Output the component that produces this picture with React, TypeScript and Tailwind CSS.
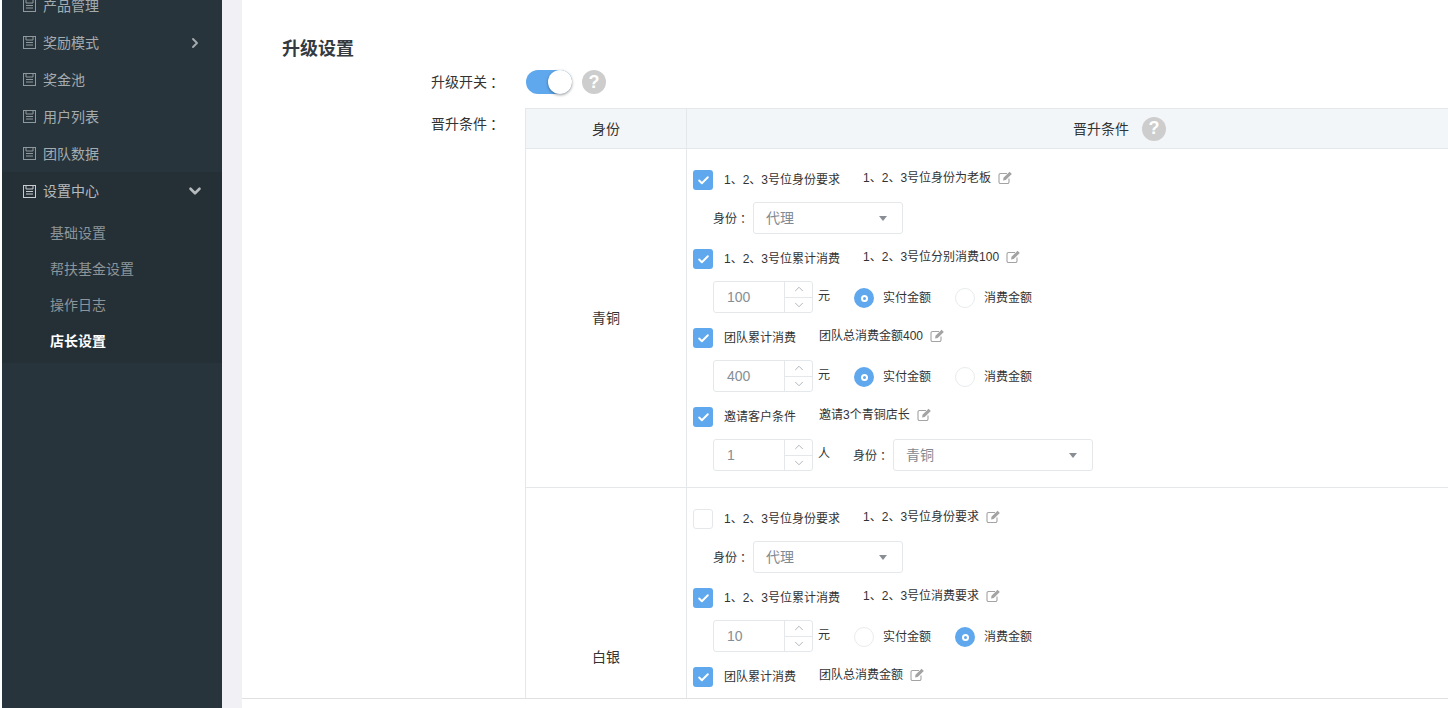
import { ChevronDown, ChevronRight, ChevronUp, Check } from "lucide-react";

const font = "font-['Liberation_Sans','Noto_Sans_CJK_SC',sans-serif]";

const NavIcon = ({ active }: { active?: boolean }) => (
	<svg width="13" height="13" viewBox="0 0 13 13" fill="none" stroke="currentColor" strokeWidth="1" className={active ? "text-[#c8cccf]" : "text-[#8f989d]"}>
		<rect x="0.5" y="0.5" width="12" height="12" />
		<path d="M3 0.5v3.5h7v-3.5M3 6.5h7M3 9h7" />
	</svg>
);

const EditIcon = () => (
	<svg width="15" height="14" viewBox="0 0 15 14" fill="none" className="text-[#a3a3a3]">
		<path d="M11 7.5v3.5a1.5 1.5 0 0 1-1.5 1.5h-7A1.5 1.5 0 0 1 1 11V4a1.5 1.5 0 0 1 1.5-1.5H9" stroke="currentColor" strokeWidth="1.1" />
		<path d="M5.5 6.8 11.6 0.8l2.2 2.2-6.1 6.1-2.6.5z" fill="currentColor" />
	</svg>
);

const Help = () => (
	<span className="flex h-6 w-6 items-center justify-center rounded-full bg-[#cdcdcd] text-[18px] font-bold text-white">?</span>
);

const Box = ({ on }: { on?: boolean }) => (
	<span className={`flex h-5 w-5 shrink-0 items-center justify-center rounded-[3px] ${on ? "bg-[#5fa8ee]" : "border border-[#e4e8eb] bg-white"}`}>
		{on && <Check size={13} strokeWidth={3.5} className="text-white" />}
	</span>
);

const CheckRow = ({ on, label, note }: { on?: boolean; label: string; note: string }) => (
	<div className="flex h-5 items-center text-xs text-[#333]">
		<Box on={on} />
		<span className="ml-[11px] mr-[23px]">{label}</span>
		<span className="relative -top-[2px]">{note}</span>
		<span className="relative -top-[2px] ml-[7px]">
			<EditIcon />
		</span>
	</div>
);

const Select = ({ value, width }: { value: string; width: string }) => (
	<div className={`flex h-8 items-center justify-between rounded-[3px] border border-[#e4e8eb] pl-3 pr-[15px] text-sm text-[#7f8a93] ${width}`}>
		<span>{value}</span>
		<span className="h-0 w-0 border-x-[4px] border-t-[5px] border-x-transparent border-t-[#888e94]" />
	</div>
);

const NumberInput = ({ value, unit }: { value: string; unit: string }) => (
	<div className="flex items-center">
		<div className="flex h-8 w-[100px] rounded-[3px] border border-[#e4e8eb]">
			<span className="flex w-[70px] items-center pl-[13px] text-sm text-[#868e96]">{value}</span>
			<div className="flex flex-1 flex-col border-l border-[#e4e8eb] text-[#a4abb2]">
				<span className="flex flex-1 items-center justify-center border-b border-[#e4e8eb]">
					<ChevronUp size={14} strokeWidth={1.5} />
				</span>
				<span className="flex flex-1 items-center justify-center">
					<ChevronDown size={14} strokeWidth={1.5} />
				</span>
			</div>
		</div>
		<span className="relative -top-[1px] ml-[5px] text-xs text-[#333]">{unit}</span>
	</div>
);

const Radio = ({ on, label }: { on?: boolean; label: string }) => (
	<div className="flex items-center text-xs text-[#333]">
		<span className={`flex h-5 w-5 items-center justify-center rounded-full ${on ? "bg-[#5fa8ee]" : "border border-[#e8ebed]"}`}>
			{on && <span className="h-[7px] w-[7px] rounded-full border-2 border-white" />}
		</span>
		<span className="ml-[9px]">{label}</span>
	</div>
);

const Money = ({ value, paid }: { value: string; paid: boolean }) => (
	<div className="flex items-center">
		<NumberInput value={value} unit="元" />
		<div className="relative top-[1px] ml-6 flex gap-6">
			<Radio on={paid} label="实付金额" />
			<Radio on={!paid} label="消费金额" />
		</div>
	</div>
);

const Identity = () => (
	<span className="text-xs text-[#333]">
		身份
		<span className="relative left-[3px]">：</span>
	</span>
);

const Invite = () => (
	<div className="flex items-center">
		<NumberInput value="1" unit="人" />
		<span className="ml-[23px] w-10">
			<Identity />
		</span>
		<Select value="青铜" width="w-[200px]" />
	</div>
);

const IdentitySelect = () => (
	<div className="flex items-center">
		<span className="w-10">
			<Identity />
		</span>
		<Select value="代理" width="w-[150px]" />
	</div>
);

const Condition = ({ head, children }: { head: React.ReactNode; children?: React.ReactNode }) => (
	<div className="flex flex-col gap-3">
		{head}
		<div className="pl-5">{children}</div>
	</div>
);

const LevelRow = ({ name, children }: { name: string; children: React.ReactNode }) => (
	<div className="flex h-[339px] border-b border-[#e4e8eb]">
		<div className="flex w-[161px] shrink-0 items-center justify-center border-r border-[#e4e8eb] text-sm text-[#333]">{name}</div>
		<div className="flex flex-1 flex-col gap-[15px] pl-[6px] pt-[21px]">{children}</div>
	</div>
);

const navItems = [
	{ label: "产品管理" },
	{ label: "奖励模式", arrow: true },
	{ label: "奖金池" },
	{ label: "用户列表" },
	{ label: "团队数据" },
];

const subItems = ["基础设置", "帮扶基金设置", "操作日志"];

export default function App() {
	return (
		<div className={`flex h-[708px] w-[1448px] overflow-hidden bg-white ${font}`}>
			<aside className="ml-[2px] flex w-[220px] shrink-0 flex-col overflow-hidden bg-[#28343b] text-sm text-[#a5acb0]">
				<div className="-mt-[13px]">
					{navItems.map((item) => (
						<div key={item.label} className="flex h-[37px] items-center pl-[21px] pr-[19px]">
							<NavIcon />
							<span className="ml-[7px] flex-1">{item.label}</span>
							{item.arrow && <ChevronRight size={16} strokeWidth={2.8} />}
						</div>
					))}
				</div>
				<div className="bg-[#252f36]">
					<div className="flex h-[37px] items-center pl-[21px] pr-[18px] pt-[1px] text-[#b5babd]">
						<NavIcon active />
						<span className="ml-[7px] flex-1">设置中心</span>
						<ChevronDown size={18} strokeWidth={3.5} />
					</div>
					<div className="flex flex-col pt-[6px] pb-[4px]">
						{subItems.map((item) => (
							<div key={item} className="flex h-9 items-center pl-[48px] text-[#8c9599]">{item}</div>
						))}
						<div className="flex h-9 items-center pl-[48px] font-bold text-white">店长设置</div>
					</div>
				</div>
			</aside>
			<div className="w-5 shrink-0 bg-[#f0f0f5]" />
			<main className="h-[699px] min-w-0 flex-1 overflow-hidden border-b border-[#e0e0e0] bg-white">
				<h1 className="mt-[37px] ml-[40px] text-[18px] leading-6 font-bold text-[#333a40]">升级设置</h1>
				<div className="mt-[9px] flex items-center">
					<span className="w-[284px] pl-[189px] text-sm text-[#333]">
						升级开关
						<span className="relative left-[3px]">：</span>
					</span>
					<span className="relative h-6 w-[46px] rounded-full bg-[#5fa8ee]">
						<span className="absolute top-0 right-0 h-6 w-6 rounded-full bg-white shadow-[0_1px_3px_rgba(0,0,0,0.4)]" />
					</span>
					<span className="ml-[10px]">
						<Help />
					</span>
				</div>
				<div className="mt-[14px] flex">
					<span className="w-[283px] shrink-0 pl-[189px] pt-[6px] text-sm text-[#333]">
						晋升条件
						<span className="relative left-[3px]">：</span>
					</span>
					<div className="w-[1100px] shrink-0 border-l border-t border-[#e4e8eb]">
						<div className="flex h-10 border-b border-[#e4e8eb] bg-[#f3f6f9] text-sm text-[#333]">
							<div className="flex w-[161px] shrink-0 items-center justify-center border-r border-[#e4e8eb]">身份</div>
							<div className="flex w-[865px] items-center justify-center gap-[13px]">
								<span>晋升条件</span>
								<Help />
							</div>
						</div>
						<LevelRow name="青铜">
							<Condition head={<CheckRow on label="1、2、3号位身份要求" note="1、2、3号位身份为老板" />}>
								<IdentitySelect />
							</Condition>
							<Condition head={<CheckRow on label="1、2、3号位累计消费" note="1、2、3号位分别消费100" />}>
								<Money value="100" paid />
							</Condition>
							<Condition head={<CheckRow on label="团队累计消费" note="团队总消费金额400" />}>
								<Money value="400" paid />
							</Condition>
							<Condition head={<CheckRow on label="邀请客户条件" note="邀请3个青铜店长" />}>
								<Invite />
							</Condition>
						</LevelRow>
						<LevelRow name="白银">
							<Condition head={<CheckRow label="1、2、3号位身份要求" note="1、2、3号位身份要求" />}>
								<IdentitySelect />
							</Condition>
							<Condition head={<CheckRow on label="1、2、3号位累计消费" note="1、2、3号位消费要求" />}>
								<Money value="10" paid={false} />
							</Condition>
							<Condition head={<CheckRow on label="团队累计消费" note="团队总消费金额" />} />
						</LevelRow>
					</div>
				</div>
			</main>
		</div>
	);
}
